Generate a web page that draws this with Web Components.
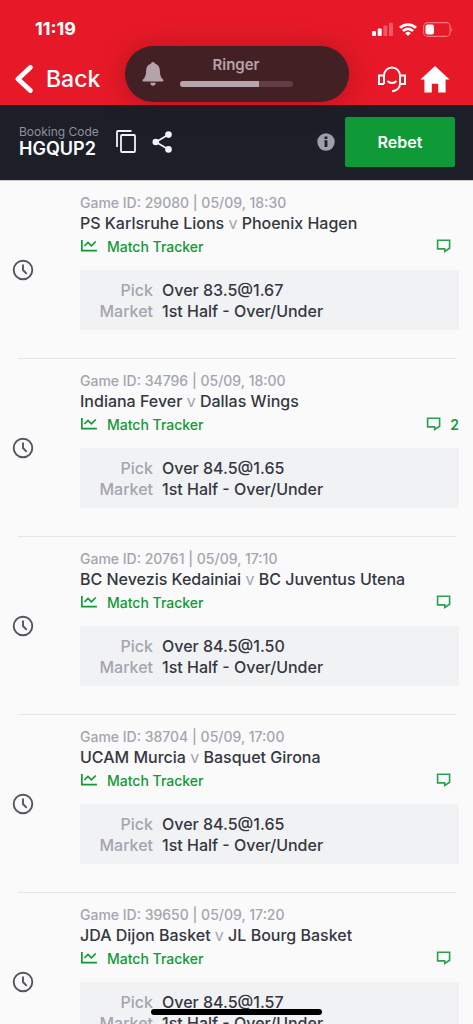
<!DOCTYPE html>
<html lang="en">
<head>
<meta charset="utf-8">
<meta name="viewport" content="width=device-width, initial-scale=1">
<title>Booking Code HGQUP2</title>
<style>
  body { margin: 0; background: #fafafa; font-family: Inter, "Liberation Sans", sans-serif; }
</style>
</head>
<body>
<bet-app></bet-app>

<template id="status-bar">
  <style>
    :host { display: flex; align-items: center; justify-content: space-between; height: 24px; padding: 17px 20px 0 35px; color: #fff; }
    time { font-size: 18px; font-weight: 700; line-height: 24px; }
    .icons { display: flex; align-items: center; gap: 6px; }
    svg { display: block; }
  </style>
  <time>11:19</time>
  <div class="icons">
    <svg width="21" height="14" viewBox="0 0 21 14" fill="#fff" aria-hidden="true">
      <rect x="0" y="9" width="4" height="5" rx="1"/><rect x="5.7" y="6.600" width="4" height="7.400" rx="1"/>
      <g opacity=".28"><rect x="11.300" y="3.500" width="4" height="10.500" rx="1"/><rect x="17" y="0.800" width="4" height="13.200" rx="1"/></g>
    </svg>
    <svg width="18" height="13" viewBox="0 0 18 13" fill="none" stroke="#fff" stroke-width="2.700" aria-hidden="true">
      <path d="M1 4.800a11.500 11.500 0 0 1 16 0M4 8a7 7 0 0 1 10 0"/><path d="M6.200 10.200a4 4 0 0 1 5.600 0L9 13z" fill="#fff" stroke="none"/>
    </svg>
    <svg width="30" height="15" viewBox="0 0 30 15" aria-hidden="true">
      <rect x=".6" y=".6" width="26.500" height="13.800" rx="4" fill="none" stroke="#fff" stroke-opacity=".4" stroke-width="1.100"/>
      <rect x="2.500" y="2.500" width="8.500" height="10" rx="2" fill="#fff"/>
      <path d="M28.400 5.200q1.600 2.300 0 4.600z" fill="#fff" opacity=".5"/>
    </svg>
  </div>
</template>

<template id="ringer-pill">
  <style>
    :host { display: flex; align-items: center; box-sizing: border-box; width: 224px; height: 56px; padding: 0 56px 0 17px; gap: 16px; border-radius: 28px; background: #432024; color: #b4a3aa; box-shadow: 0 2px 28px rgba(60, 0, 10, .28); }
    svg { display: block; flex: none; }
    .level { flex: 1; display: grid; gap: 6px; padding-bottom: 6px; text-align: center; font-size: 15px; font-weight: 600; line-height: 20px; }
    .track { height: 6px; border-radius: 3px; background: #633f45; overflow: hidden; }
    .fill { width: 70%; height: 100%; background: #b7a5ae; }
  </style>
  <svg width="22" height="24" viewBox="0 0 22 24" fill="currentColor" aria-hidden="true">
    <path d="M11 0c1.100 0 1.900.8 2.100 1.800 3.300.9 4.700 3.700 4.800 7 .1 4.700.9 6.700 3.200 8.700.8.800.5 2-.6 2h-19c-1.100 0-1.400-1.200-.6-2 2.300-2 3.100-4 3.200-8.700.1-3.300 1.500-6.100 4.800-7C9.100.8 9.900 0 11 0zM8.200 20.800h5.600c-.2 1.900-1.300 2.900-2.800 2.900s-2.600-1-2.800-2.900z"/>
  </svg>
  <div class="level"><span>Ringer</span><div class="track"><div class="fill"></div></div></div>
</template>

<template id="top-nav">
  <style>
    :host { display: block; position: relative; height: 105px; background: #e71928; color: #fff; }
    nav { display: flex; align-items: center; justify-content: space-between; height: 76px; padding: 0 23px 0 15px; box-sizing: border-box; }
    a, .actions { display: flex; align-items: center; color: inherit; text-decoration: none; }
    .back { gap: 13px; font-size: 23px; font-weight: 500; line-height: 28px; }
    .actions { gap: 14px; }
    svg { display: block; }
    ringer-pill { position: absolute; top: 46px; left: calc(50% - 112px); }
  </style>
  <status-bar></status-bar>
  <nav>
    <a class="back" href="#back">
      <svg width="18" height="28" viewBox="0 0 18 28" fill="none" stroke="#fff" stroke-width="4.800" stroke-linecap="round" stroke-linejoin="round" aria-hidden="true"><path d="M15.300 2.500 3 14l12.300 11.500"/></svg>
      Back</a>
    <div class="actions">
      <a href="#support" aria-label="Support">
        <svg width="28" height="27" viewBox="0 0 28 27" fill="none" stroke="#fff" stroke-width="2" aria-hidden="true">
          <path d="M6 18V9.500a8 8 0 0 1 16 0V18c0 4-3.500 6.800-8 7.200M6 9.500H1V18h5M22 9.500h5V18h-5M9.500 15c2.200 2.500 6.800 2.500 9 0"/>
        </svg></a>
      <a href="#home" aria-label="Home">
        <svg width="30" height="27" viewBox="0 0 30 27" fill="#fff" aria-hidden="true"><path d="M15 0 .4 13.400h4V26.500h7.400v-8.700h6.400v8.700h7.400V13.400h4z"/></svg></a>
    </div>
  </nav>
  <ringer-pill></ringer-pill>
</template>

<template id="booking-bar">
  <style>
    :host { display: flex; align-items: center; box-sizing: border-box; height: 75px; padding: 0 18px 2px 19px; background: #1c1f27; color: #fff; }
    .code { display: grid; margin-right: 17px; }
    .label { font-size: 12px; font-weight: 400; line-height: 14px; color: #8d909b; }
    strong { font-size: 18px; font-weight: 600; line-height: 20px; }
    button { font: inherit; color: inherit; border: 0; padding: 0; background: none; }
    svg { display: block; }
    .share { margin-left: 16px; }
    .info { margin-left: auto; margin-right: 10px; }
    .rebet { width: 110px; height: 50px; border-radius: 2px; background: #0f9a37; font-size: 16px; font-weight: 600; }
  </style>
  <div class="code"><span class="label">Booking Code</span><strong>HGQUP2</strong></div>
  <button aria-label="Copy code"><svg width="20" height="23" viewBox="0 0 20 23" fill="none" stroke="#f0f2f7" stroke-width="1.800" aria-hidden="true"><rect x="5" y="5" width="14" height="17" rx="1"/><path d="M1 17V2q0-1 1-1h13.500"/></svg></button>
  <button class="share" aria-label="Share"><svg width="21" height="22" viewBox="0 0 21 22" fill="#f0f2f7" aria-hidden="true"><path d="M16.500 3.500 4 11l12.500 7.500" fill="none" stroke="#f0f2f7" stroke-width="1.700"/><circle cx="16.500" cy="3.600" r="3.300"/><circle cx="3.800" cy="11" r="3.300"/><circle cx="16.500" cy="18.400" r="3.300"/></svg></button>
  <button class="info" aria-label="Information"><svg width="18" height="18" viewBox="0 0 18 18" aria-hidden="true"><circle cx="9" cy="9" r="8.700" fill="#9da0ac"/><path d="M7.300 7.300h3.100v6.700H7.600V8.600h-.3zM7.500 3.600h2.900v2.500H7.500z" fill="#1c1f27"/></svg></button>
  <button class="rebet">Rebet</button>
</template>

<template id="bet-item">
  <style>
    :host { display: flex; align-items: center; padding: 11px 14px 28px 12px; border-top: 1px solid transparent; border-image: linear-gradient(90deg, transparent 19px, #e6e7e9 19px, #e6e7e9 calc(100% - 18px), transparent calc(100% - 18px)) 1; color: #353741; font-weight: 500; }
    :host(:first-child) { border-image: none; border-top-color: #c6c8ce; }
    svg { display: block; flex: none; }
    .clock { margin: 17px 46px 0 0; }
    article { flex: 1; min-width: 0; }
    .id { font-size: 14px; line-height: 21px; color: #a3a5af; }
    h2 { margin: 0; font-size: 16px; font-weight: 500; line-height: 20px; }
    .v { color: #a3a5af; font-weight: 400; }
    .links { display: flex; align-items: center; justify-content: space-between; height: 26px; margin-bottom: 11px; font-size: 14px; }
    a { display: flex; align-items: center; color: #0f9a37; text-decoration: none; }
    .tracker { gap: 10px; }
    .chat { gap: 9px; padding-right: 8px; font-weight: 600; }
    .chat.counted { padding-right: 0; }
    dl { display: grid; grid-template-columns: 73px 1fr; column-gap: 9px; margin: 0; padding: 10px 0 8px; background: #f1f2f4; font-size: 16px; line-height: 21px; }
    dt { text-align: right; color: #a3a5af; }
    dd { margin: 0; }
  </style>
  <svg class="clock" width="22" height="22" viewBox="0 0 22 22" fill="none" stroke="#54565f" stroke-width="1.900" aria-hidden="true"><circle cx="11" cy="11" r="9.300"/><path d="M11 5.500V11l3.700 3.800"/></svg>
  <article>
    <div class="id"><slot name="id"></slot></div>
    <h2><slot name="home"></slot> <span class="v">v</span> <slot name="away"></slot></h2>
    <div class="links">
      <a class="tracker" href="#tracker"><svg width="17" height="12" viewBox="0 0 17 12" fill="none" stroke="#0f9a37" stroke-width="1.700" aria-hidden="true"><path d="M1.900 0v10.700h15M4.400 6 8 2.500l3.400 3.300L15.800 1.500"/></svg><span>Match Tracker</span></a>
      <a class="chat" href="#chat" aria-label="Comments"><svg width="15" height="14" viewBox="0 0 15 14" fill="none" stroke="#2a9f51" stroke-width="1.600" aria-hidden="true"><path d="M1.600 1.200h12v8L8.700 12.400v-2.500H1.600z"/></svg></a>
    </div>
    <dl><dt>Pick</dt><dd><slot name="pick"></slot></dd><dt>Market</dt><dd><slot name="market"></slot></dd></dl>
  </article>
</template>

<template id="bet-app">
  <style>
    :host { display: flex; flex-direction: column; height: 100vh; overflow: hidden; }
    top-nav, booking-bar { flex: none; }
    main { flex: 1; min-height: 0; overflow-y: auto; scrollbar-width: none; }
    .home-indicator { position: fixed; bottom: 9px; left: 32%; right: 32%; height: 6px; border-radius: 3px; background: #000; }
  </style>
  <top-nav></top-nav>
  <booking-bar></booking-bar>
  <main></main>
  <div class="home-indicator"></div>
</template>

<script>
  class TemplateElement extends HTMLElement {
    constructor() {
      super();
      const template = document.getElementById(this.localName);
      this.attachShadow({ mode: "open" }).append(template.content.cloneNode(true));
    }
  }

  class BetItem extends TemplateElement {
    connectedCallback() {
      const count = this.getAttribute("comments");
      if (!count) return;
      const chat = this.shadowRoot.querySelector(".chat");
      const label = document.createElement("span");
      label.textContent = count;
      chat.classList.add("counted");
      chat.append(label);
    }
  }

  const bets = [
    { id: "29080 | 05/09, 18:30", home: "PS Karlsruhe Lions", away: "Phoenix Hagen", pick: "Over 83.5@1.67" },
    { id: "34796 | 05/09, 18:00", home: "Indiana Fever", away: "Dallas Wings", pick: "Over 84.5@1.65", comments: "2" },
    { id: "20761 | 05/09, 17:10", home: "BC Nevezis Kedainiai", away: "BC Juventus Utena", pick: "Over 84.5@1.50" },
    { id: "38704 | 05/09, 17:00", home: "UCAM Murcia", away: "Basquet Girona", pick: "Over 84.5@1.65" },
    { id: "39650 | 05/09, 17:20", home: "JDA Dijon Basket", away: "JL Bourg Basket", pick: "Over 84.5@1.57" }
  ];

  class BetApp extends TemplateElement {
    connectedCallback() {
      this.shadowRoot.querySelector("main").innerHTML = bets.map(b => `
        <bet-item${b.comments ? ` comments="${b.comments}"` : ""}>
          <span slot="id">Game ID: ${b.id}</span>
          <span slot="home">${b.home}</span>
          <span slot="away">${b.away}</span>
          <span slot="pick">${b.pick}</span>
          <span slot="market">1st Half - Over/Under</span>
        </bet-item>`).join("");
    }
  }

  customElements.define("status-bar", class extends TemplateElement {});
  customElements.define("ringer-pill", class extends TemplateElement {});
  customElements.define("top-nav", class extends TemplateElement {});
  customElements.define("booking-bar", class extends TemplateElement {});
  customElements.define("bet-item", BetItem);
  customElements.define("bet-app", BetApp);
</script>
</body>
</html>
